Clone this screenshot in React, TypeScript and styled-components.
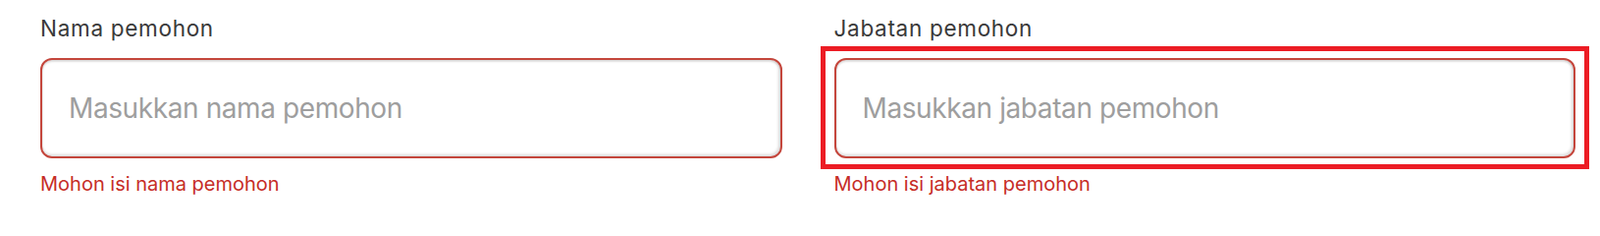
import React from 'react'
import styled, { createGlobalStyle } from 'styled-components'

const GlobalStyle = createGlobalStyle`
  html, body {
    margin: 0;
    padding: 0;
    background-color: #fff;
  }

  body {
    font-family: Inter, "Noto Sans", "Liberation Sans", sans-serif;
  }
`

const FormRow = styled.div`
  display: grid;
  grid-template-columns: 1fr 1fr;
  column-gap: 53px;
  padding: 14px 25px 0 41px;
`

const Field = styled.div`
  display: flex;
  flex-direction: column;
`

const Label = styled.label`
  color: #3a3a3a;
  font-size: 22.5px;
  letter-spacing: 0.7px;
  line-height: 30px;
  margin-bottom: 15px;
`

const InputShell = styled.div<{ $highlighted?: boolean }>`
  position: relative;

  ${({ $highlighted }) => $highlighted && `
    &::after {
      content: '';
      position: absolute;
      top: -12px;
      right: -14px;
      bottom: -11px;
      left: -14px;
      border: 5px solid #ec1c24;
      pointer-events: none;
    }
  `}
`

const Input = styled.input<{ $invalid?: boolean }>`
  box-sizing: border-box;
  width: 100%;
  height: 102px;
  padding: 0 27px;
  border: 2px solid ${({ $invalid }) => ($invalid ? '#c4463c' : '#cfcfcf')};
  border-radius: 12px;
  box-shadow: inset -1px -1px 3px 1px rgba(0, 0, 0, 0.14), inset 0 2px 2px rgba(0, 0, 0, 0.1);
  background-color: #fff;
  color: #333;
  font-family: inherit;
  font-size: 28px;
  letter-spacing: -0.4px;
  outline: none;

  &::placeholder {
    color: #9e9e9e;
  }
`

const ErrorText = styled.span`
  color: #c62d27;
  font-size: 20px;
  line-height: 28px;
  margin-top: 12px;
`

interface IFormField {
  id: string
  label: string
  placeholder: string
  error?: string
  highlighted?: boolean
}

const FormField = ({ id, label, placeholder, error, highlighted }: IFormField) => {
  return (
    <Field>
      <Label htmlFor={id}>{label}</Label>
      <InputShell $highlighted={highlighted}>
        <Input id={id} type='text' placeholder={placeholder} $invalid={!!error} />
      </InputShell>
      {error && <ErrorText>{error}</ErrorText>}
    </Field>
  )
}

const App = () => {
  return (
    <>
      <GlobalStyle />
      <FormRow>
        <FormField
          id='nama'
          label='Nama pemohon'
          placeholder='Masukkan nama pemohon'
          error='Mohon isi nama pemohon'
        />
        <FormField
          id='jabatan'
          label='Jabatan pemohon'
          placeholder='Masukkan jabatan pemohon'
          error='Mohon isi jabatan pemohon'
          highlighted
        />
      </FormRow>
    </>
  )
}

export default App
